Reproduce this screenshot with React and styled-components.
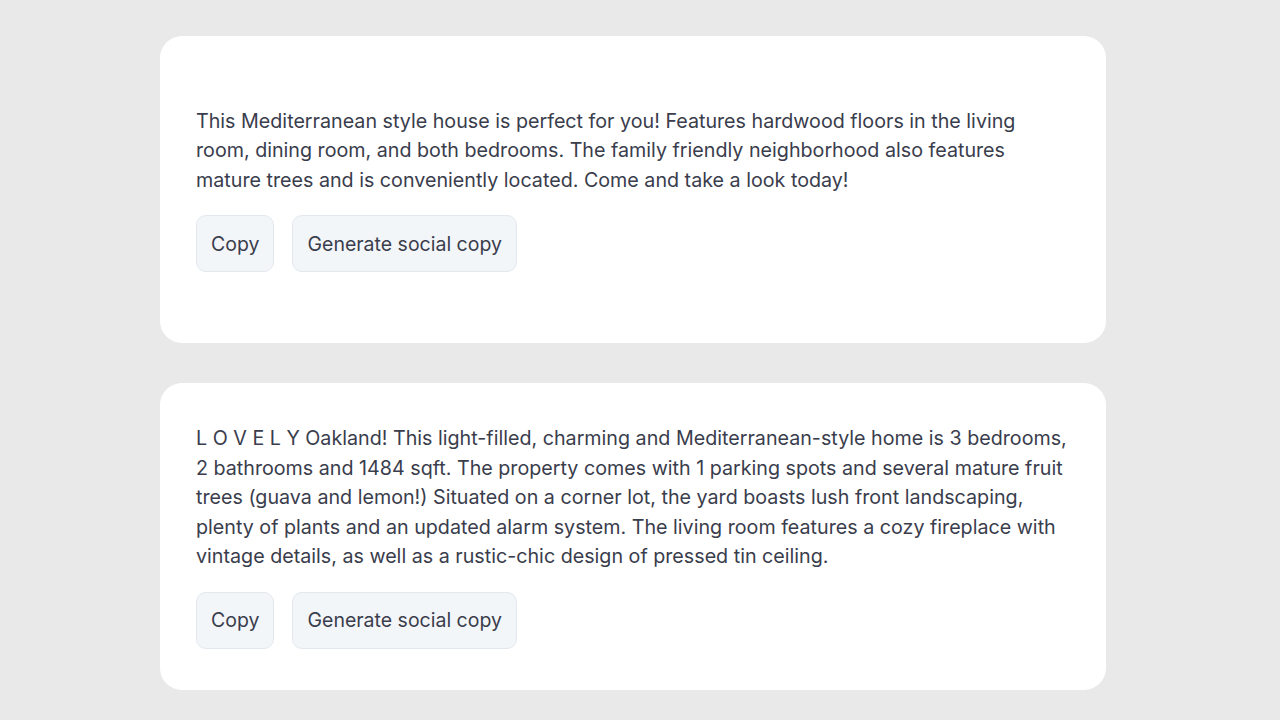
import React from 'react';
import styled, { createGlobalStyle } from 'styled-components';

const GlobalStyle = createGlobalStyle`
  html, body {
    margin: 0;
    padding: 0;
    background: #e9e9e9;
    font-family: Inter, "Noto Sans", sans-serif;
  }
`;

const Page = styled.div`
  display: flex;
  flex-direction: column;
  align-items: flex-start;
  gap: 40px;
  padding: 36px 0 36px 160px;
`;

const Card = styled.div`
  box-sizing: border-box;
  width: 946px;
  height: 307px;
  background: #ffffff;
  border-radius: 22px;
  padding: 0 36px;
  display: flex;
  flex-direction: column;
  justify-content: center;
  gap: 20px;
`;

const Text = styled.p`
  margin: 0;
  font-size: 19.7px;
  line-height: 29.6px;
  color: #3a3d4c;
`;

const Actions = styled.div`
  display: flex;
  gap: 18px;
`;

const Button = styled.button`
  box-sizing: border-box;
  height: 57px;
  padding: 0 14px;
  border: 1px solid #e3e8ee;
  border-radius: 10px;
  background: #f3f6f9;
  font-family: Inter, "Noto Sans", sans-serif;
  font-size: 19.5px;
  color: #3a3d4c;
  cursor: pointer;
`;

const listings = [
  'This Mediterranean style house is perfect for you! Features hardwood floors in the living room, dining room, and both bedrooms. The family friendly neighborhood also features mature trees and is conveniently located. Come and take a look today!',
  'L O V E L Y Oakland! This light-filled, charming and Mediterranean-style home is 3 bedrooms, 2 bathrooms and 1484 sqft. The property comes with 1 parking spots and several mature fruit trees (guava and lemon!) Situated on a corner lot, the yard boasts lush front landscaping, plenty of plants and an updated alarm system. The living room features a cozy fireplace with vintage details, as well as a rustic-chic design of pressed tin ceiling.',
];

const App = () => {
  return (
    <>
      <GlobalStyle />
      <Page>
        {listings.map((text, i) => (
          <Card key={i}>
            <Text>{text}</Text>
            <Actions>
              <Button>Copy</Button>
              <Button>Generate social copy</Button>
            </Actions>
          </Card>
        ))}
      </Page>
    </>
  );
};

export default App;
